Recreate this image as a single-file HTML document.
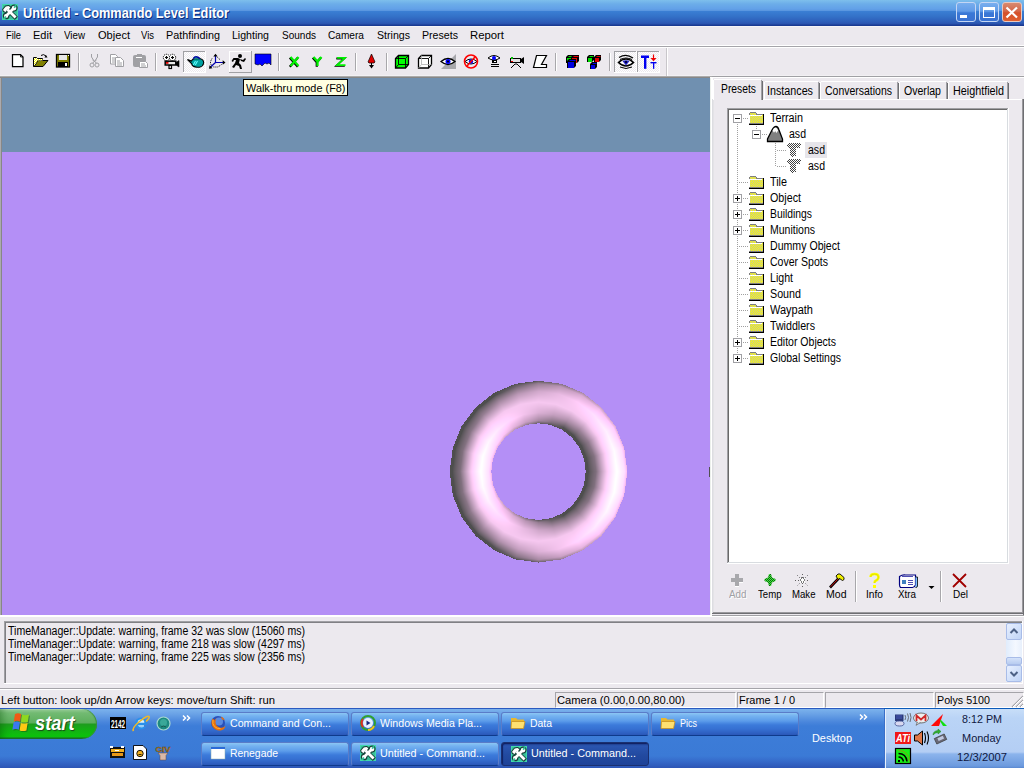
<!DOCTYPE html>
<html><head><meta charset="utf-8"><style>
html,body{margin:0;padding:0;width:1024px;height:768px;overflow:hidden;background:#ECE9EE;position:relative;font-family:'Liberation Sans', sans-serif}
</style></head><body>
<div style="position:absolute;left:0px;top:0px;width:1024px;height:26px;background:linear-gradient(to bottom,#7EBFEC 0px,#6CADE9 4px,#62A0E8 9px,#5A97E0 10.5px,#3A7ED3 11.5px,#3473C9 16px,#2D5DB8 22px,#2A52AD 24px,#1A3A92 25px,#1A3A92 26px)"></div>
<svg style="position:absolute;left:2px;top:4px" width="16" height="16" viewBox="0 0 16 16"><rect width="16" height="16" fill="#40D8AC"/><rect x="1" y="1" width="14" height="14" fill="#38BE98"/>
<g stroke="#174238" stroke-width="1.3" fill="#174238" stroke-linejoin="round"><path d="M0.8 5.4 L3.6 2.2 L6.6 1.6 L8.8 3.2 L7.6 5.2 L5.2 6.4 L4 8.4 L1.4 7.4 Z"/><circle cx="12.1" cy="4.1" r="2.9"/><circle cx="4.1" cy="12" r="2.7"/></g>
<g stroke="#174238" stroke-width="4.4" stroke-linecap="square" fill="none"><path d="M6.5 6.5 L12.8 12.8"/><path d="M4.5 11.5 L11.5 4.5"/></g>
<g stroke="#fff" stroke-width="2.8" stroke-linecap="square" fill="none"><path d="M6.5 6.5 L12.6 12.6"/><path d="M4.6 11.4 L11.4 4.6"/></g>
<g fill="#fff"><path d="M1.2 5.4 L3.8 2.6 L6.5 2.1 L8.3 3.3 L7.2 4.9 L4.9 6.1 L3.8 7.9 L1.7 7.1 Z"/><circle cx="12.1" cy="4.1" r="2.3"/><circle cx="4.1" cy="12" r="2.1"/></g>
<g fill="#38BE98"><rect x="12.2" y="1" width="1.8" height="3" transform="rotate(45 13.1 2.5)"/><rect x="2.1" y="12.2" width="1.8" height="3" transform="rotate(45 3 13.7)"/></g></svg>
<div style="position:absolute;left:956px;top:2px;width:20px;height:20px;box-sizing:border-box;border:1px solid #C4D6F4;border-radius:3px;background:linear-gradient(to bottom,#78AEEE 0%,#629CE8 45%,#3A78D6 55%,#3A72D2 100%)"></div>
<div style="position:absolute;left:979px;top:2px;width:20px;height:20px;box-sizing:border-box;border:1px solid #C4D6F4;border-radius:3px;background:linear-gradient(to bottom,#78AEEE 0%,#629CE8 45%,#3A78D6 55%,#3A72D2 100%)"></div>
<div style="position:absolute;left:1002px;top:2px;width:20px;height:20px;box-sizing:border-box;border:1px solid #E8C8C0;border-radius:3px;background:linear-gradient(to bottom,#D88A70 0%,#D5684A 45%,#D5502A 55%,#E06030 100%)"></div>
<div style="position:absolute;left:960px;top:15px;width:7px;height:3px;background:#fff"></div>
<div style="position:absolute;left:983px;top:7px;width:12px;height:11px;box-sizing:border-box;border:1px solid #fff;border-top-width:3px"></div>
<svg style="position:absolute;left:1005px;top:6px" width="14" height="13"><path d="M1.5 1.5 L12 11.5 M12 1.5 L1.5 11.5" stroke="#fff" stroke-width="2.2"/></svg>
<div style="position:absolute;left:0px;top:26px;width:1024px;height:1px;background:#F6F4F6"></div>
<div style="position:absolute;left:0px;top:45px;width:1024px;height:1px;background:#FFFFFF"></div>
<div style="position:absolute;left:0px;top:46px;width:1024px;height:1px;background:#A5A4A9"></div>
<div style="position:absolute;left:0px;top:47px;width:1024px;height:1px;background:#FFFFFF"></div>
<div style="position:absolute;left:0px;top:75px;width:1024px;height:1px;background:#F2F0F3"></div>
<div style="position:absolute;left:0px;top:76px;width:712px;height:1px;background:#ABABAB"></div>
<div style="position:absolute;left:0px;top:77px;width:710px;height:1px;background:#878787"></div>
<div style="position:absolute;left:712px;top:76px;width:312px;height:1px;background:#A0A0A4"></div>
<div style="position:absolute;left:712px;top:77px;width:312px;height:1px;background:#FFFFFF"></div>
<div style="position:absolute;left:666px;top:48px;width:1px;height:28px;background:#C8C6CA"></div>
<div style="position:absolute;left:667px;top:48px;width:1px;height:28px;background:#FFFFFF"></div>
<div style="position:absolute;left:0px;top:78px;width:1px;height:538px;background:#ABAAAE"></div>
<div style="position:absolute;left:1px;top:78px;width:1px;height:537px;background:#878787"></div>
<div style="position:absolute;left:2px;top:78px;width:708px;height:74px;background:#7090B0"></div>
<div style="position:absolute;left:2px;top:152px;width:708px;height:463px;background:#B48FF6"></div>
<div style="position:absolute;left:710px;top:77px;width:2px;height:540px;background:#FFFFFF"></div>
<div style="position:absolute;left:710px;top:78px;width:1px;height:537px;background:#ECF0EC"></div>
<div style="position:absolute;left:0px;top:615px;width:712px;height:2px;background:#FFFFFF"></div>
<div style="position:absolute;left:712px;top:78px;width:1px;height:536px;background:#E0DFE3"></div>
<div style="position:absolute;left:712px;top:613px;width:311px;height:1px;background:#8A8A8E"></div>
<div style="position:absolute;left:712px;top:615px;width:312px;height:1px;background:#A0A0A4"></div>
<div style="position:absolute;left:712px;top:616px;width:312px;height:1px;background:#FFFFFF"></div>
<div style="position:absolute;left:4px;top:621px;width:1019px;height:1px;background:#A0A0A4"></div>
<div style="position:absolute;left:4px;top:621px;width:1px;height:62px;background:#A0A0A4"></div>
<div style="position:absolute;left:5px;top:622px;width:1017px;height:1px;background:#808084"></div>
<div style="position:absolute;left:5px;top:622px;width:1px;height:61px;background:#808084"></div>
<div style="position:absolute;left:4px;top:683px;width:1019px;height:1px;background:#FFFFFF"></div>
<div style="position:absolute;left:1022px;top:621px;width:1px;height:63px;background:#FFFFFF"></div>
<div style="position:absolute;left:0px;top:688px;width:1024px;height:1px;background:#A5A4A9"></div>
<div style="position:absolute;left:0px;top:689px;width:1024px;height:1px;background:#FFFFFF"></div>
<div style="position:absolute;left:0px;top:708px;width:1024px;height:60px;background:linear-gradient(to bottom,#2A5AC0 0px,#2A5AC0 1px,#7BB2EC 1px,#6AA2E6 6px,#4A86DC 14px,#3D7DD8 18px,#3B7AD6 48px,#3568C8 54px,#2D55B5 60px)"></div>
<div style="position:absolute;left:712px;top:99px;width:312px;height:1px;background:#FFFFFF"></div>
<div style="position:absolute;left:712px;top:78px;width:1px;height:536px;background:#FFFFFF"></div>
<div style="position:absolute;left:713px;top:99px;width:1px;height:515px;background:#E4E3E7"></div>
<div style="position:absolute;left:712px;top:99px;width:1px;height:515px;background:#DDDDE1"></div>
<div style="position:absolute;left:1022px;top:99px;width:1px;height:515px;background:#9A999D"></div>
<div style="position:absolute;left:1023px;top:99px;width:1px;height:516px;background:#6E6E72"></div>
<div style="position:absolute;left:713px;top:612px;width:310px;height:1px;background:#9A999D"></div>
<div style="position:absolute;left:712px;top:613px;width:312px;height:1px;background:#6E6E72"></div>
<div style="position:absolute;left:764px;top:81px;width:56px;height:18px;background:#ECE9EE"></div>
<div style="position:absolute;left:765px;top:81px;width:53px;height:1px;background:#FFFFFF"></div>
<div style="position:absolute;left:764px;top:82px;width:1px;height:17px;background:#FFFFFF"></div>
<div style="position:absolute;left:818px;top:82px;width:1px;height:17px;background:#A0A0A4"></div>
<div style="position:absolute;left:819px;top:83px;width:1px;height:16px;background:#6E6E72"></div>
<div style="position:absolute;left:820px;top:81px;width:79px;height:18px;background:#ECE9EE"></div>
<div style="position:absolute;left:821px;top:81px;width:76px;height:1px;background:#FFFFFF"></div>
<div style="position:absolute;left:820px;top:82px;width:1px;height:17px;background:#FFFFFF"></div>
<div style="position:absolute;left:897px;top:82px;width:1px;height:17px;background:#A0A0A4"></div>
<div style="position:absolute;left:898px;top:83px;width:1px;height:16px;background:#6E6E72"></div>
<div style="position:absolute;left:899px;top:81px;width:49px;height:18px;background:#ECE9EE"></div>
<div style="position:absolute;left:900px;top:81px;width:46px;height:1px;background:#FFFFFF"></div>
<div style="position:absolute;left:899px;top:82px;width:1px;height:17px;background:#FFFFFF"></div>
<div style="position:absolute;left:946px;top:82px;width:1px;height:17px;background:#A0A0A4"></div>
<div style="position:absolute;left:947px;top:83px;width:1px;height:16px;background:#6E6E72"></div>
<div style="position:absolute;left:948px;top:81px;width:61px;height:18px;background:#ECE9EE"></div>
<div style="position:absolute;left:949px;top:81px;width:58px;height:1px;background:#FFFFFF"></div>
<div style="position:absolute;left:948px;top:82px;width:1px;height:17px;background:#FFFFFF"></div>
<div style="position:absolute;left:1007px;top:82px;width:1px;height:17px;background:#A0A0A4"></div>
<div style="position:absolute;left:1008px;top:83px;width:1px;height:16px;background:#6E6E72"></div>
<div style="position:absolute;left:713px;top:79px;width:50px;height:21px;background:#ECE9EE"></div>
<div style="position:absolute;left:714px;top:79px;width:47px;height:1px;background:#FFFFFF"></div>
<div style="position:absolute;left:713px;top:80px;width:1px;height:20px;background:#FFFFFF"></div>
<div style="position:absolute;left:761px;top:80px;width:1px;height:20px;background:#A0A0A4"></div>
<div style="position:absolute;left:762px;top:81px;width:1px;height:19px;background:#6E6E72"></div>
<div style="position:absolute;left:727px;top:108px;width:282px;height:456px;background:#FFFFFF"></div>
<div style="position:absolute;left:727px;top:108px;width:281px;height:1px;background:#A0A0A4"></div>
<div style="position:absolute;left:727px;top:108px;width:1px;height:455px;background:#A0A0A4"></div>
<div style="position:absolute;left:728px;top:109px;width:279px;height:1px;background:#696969"></div>
<div style="position:absolute;left:728px;top:109px;width:1px;height:453px;background:#696969"></div>
<div style="position:absolute;left:1007px;top:109px;width:1px;height:454px;background:#D8DCE0"></div>
<div style="position:absolute;left:728px;top:562px;width:280px;height:1px;background:#D8DCE0"></div>
<div style="position:absolute;left:1008px;top:108px;width:1px;height:456px;background:#FFFFFF"></div>
<div style="position:absolute;left:727px;top:563px;width:282px;height:1px;background:#FFFFFF"></div>
<div style="position:absolute;left:805px;top:142px;width:22px;height:16px;background:#E6E5EA"></div>
<svg style="position:absolute;left:0;top:0" width="1024" height="768" shape-rendering="crispEdges"><defs><pattern id="dith" width="2" height="2" patternUnits="userSpaceOnUse"><rect width="2" height="2" fill="#FFFF00"/><rect width="1" height="1" fill="#C0C0A0"/><rect x="1" y="1" width="1" height="1" fill="#C0C0A0"/></pattern><pattern id="chk" width="2" height="2" patternUnits="userSpaceOnUse"><rect width="2" height="2" fill="#fff"/><rect width="1" height="1" fill="#000"/><rect x="1" y="1" width="1" height="1" fill="#000"/></pattern></defs><rect x="737" y="124" width="1" height="1" fill="#A0A0A0"/><rect x="737" y="126" width="1" height="1" fill="#A0A0A0"/><rect x="737" y="128" width="1" height="1" fill="#A0A0A0"/><rect x="737" y="130" width="1" height="1" fill="#A0A0A0"/><rect x="737" y="132" width="1" height="1" fill="#A0A0A0"/><rect x="737" y="134" width="1" height="1" fill="#A0A0A0"/><rect x="737" y="136" width="1" height="1" fill="#A0A0A0"/><rect x="737" y="138" width="1" height="1" fill="#A0A0A0"/><rect x="737" y="140" width="1" height="1" fill="#A0A0A0"/><rect x="737" y="142" width="1" height="1" fill="#A0A0A0"/><rect x="737" y="144" width="1" height="1" fill="#A0A0A0"/><rect x="737" y="146" width="1" height="1" fill="#A0A0A0"/><rect x="737" y="148" width="1" height="1" fill="#A0A0A0"/><rect x="737" y="150" width="1" height="1" fill="#A0A0A0"/><rect x="737" y="152" width="1" height="1" fill="#A0A0A0"/><rect x="737" y="154" width="1" height="1" fill="#A0A0A0"/><rect x="737" y="156" width="1" height="1" fill="#A0A0A0"/><rect x="737" y="158" width="1" height="1" fill="#A0A0A0"/><rect x="737" y="160" width="1" height="1" fill="#A0A0A0"/><rect x="737" y="162" width="1" height="1" fill="#A0A0A0"/><rect x="737" y="164" width="1" height="1" fill="#A0A0A0"/><rect x="737" y="166" width="1" height="1" fill="#A0A0A0"/><rect x="737" y="168" width="1" height="1" fill="#A0A0A0"/><rect x="737" y="170" width="1" height="1" fill="#A0A0A0"/><rect x="737" y="172" width="1" height="1" fill="#A0A0A0"/><rect x="737" y="174" width="1" height="1" fill="#A0A0A0"/><rect x="737" y="176" width="1" height="1" fill="#A0A0A0"/><rect x="737" y="178" width="1" height="1" fill="#A0A0A0"/><rect x="737" y="180" width="1" height="1" fill="#A0A0A0"/><rect x="737" y="182" width="1" height="1" fill="#A0A0A0"/><rect x="737" y="184" width="1" height="1" fill="#A0A0A0"/><rect x="737" y="186" width="1" height="1" fill="#A0A0A0"/><rect x="737" y="188" width="1" height="1" fill="#A0A0A0"/><rect x="737" y="190" width="1" height="1" fill="#A0A0A0"/><rect x="737" y="192" width="1" height="1" fill="#A0A0A0"/><rect x="737" y="194" width="1" height="1" fill="#A0A0A0"/><rect x="737" y="196" width="1" height="1" fill="#A0A0A0"/><rect x="737" y="198" width="1" height="1" fill="#A0A0A0"/><rect x="737" y="200" width="1" height="1" fill="#A0A0A0"/><rect x="737" y="202" width="1" height="1" fill="#A0A0A0"/><rect x="737" y="204" width="1" height="1" fill="#A0A0A0"/><rect x="737" y="206" width="1" height="1" fill="#A0A0A0"/><rect x="737" y="208" width="1" height="1" fill="#A0A0A0"/><rect x="737" y="210" width="1" height="1" fill="#A0A0A0"/><rect x="737" y="212" width="1" height="1" fill="#A0A0A0"/><rect x="737" y="214" width="1" height="1" fill="#A0A0A0"/><rect x="737" y="216" width="1" height="1" fill="#A0A0A0"/><rect x="737" y="218" width="1" height="1" fill="#A0A0A0"/><rect x="737" y="220" width="1" height="1" fill="#A0A0A0"/><rect x="737" y="222" width="1" height="1" fill="#A0A0A0"/><rect x="737" y="224" width="1" height="1" fill="#A0A0A0"/><rect x="737" y="226" width="1" height="1" fill="#A0A0A0"/><rect x="737" y="228" width="1" height="1" fill="#A0A0A0"/><rect x="737" y="230" width="1" height="1" fill="#A0A0A0"/><rect x="737" y="232" width="1" height="1" fill="#A0A0A0"/><rect x="737" y="234" width="1" height="1" fill="#A0A0A0"/><rect x="737" y="236" width="1" height="1" fill="#A0A0A0"/><rect x="737" y="238" width="1" height="1" fill="#A0A0A0"/><rect x="737" y="240" width="1" height="1" fill="#A0A0A0"/><rect x="737" y="242" width="1" height="1" fill="#A0A0A0"/><rect x="737" y="244" width="1" height="1" fill="#A0A0A0"/><rect x="737" y="246" width="1" height="1" fill="#A0A0A0"/><rect x="737" y="248" width="1" height="1" fill="#A0A0A0"/><rect x="737" y="250" width="1" height="1" fill="#A0A0A0"/><rect x="737" y="252" width="1" height="1" fill="#A0A0A0"/><rect x="737" y="254" width="1" height="1" fill="#A0A0A0"/><rect x="737" y="256" width="1" height="1" fill="#A0A0A0"/><rect x="737" y="258" width="1" height="1" fill="#A0A0A0"/><rect x="737" y="260" width="1" height="1" fill="#A0A0A0"/><rect x="737" y="262" width="1" height="1" fill="#A0A0A0"/><rect x="737" y="264" width="1" height="1" fill="#A0A0A0"/><rect x="737" y="266" width="1" height="1" fill="#A0A0A0"/><rect x="737" y="268" width="1" height="1" fill="#A0A0A0"/><rect x="737" y="270" width="1" height="1" fill="#A0A0A0"/><rect x="737" y="272" width="1" height="1" fill="#A0A0A0"/><rect x="737" y="274" width="1" height="1" fill="#A0A0A0"/><rect x="737" y="276" width="1" height="1" fill="#A0A0A0"/><rect x="737" y="278" width="1" height="1" fill="#A0A0A0"/><rect x="737" y="280" width="1" height="1" fill="#A0A0A0"/><rect x="737" y="282" width="1" height="1" fill="#A0A0A0"/><rect x="737" y="284" width="1" height="1" fill="#A0A0A0"/><rect x="737" y="286" width="1" height="1" fill="#A0A0A0"/><rect x="737" y="288" width="1" height="1" fill="#A0A0A0"/><rect x="737" y="290" width="1" height="1" fill="#A0A0A0"/><rect x="737" y="292" width="1" height="1" fill="#A0A0A0"/><rect x="737" y="294" width="1" height="1" fill="#A0A0A0"/><rect x="737" y="296" width="1" height="1" fill="#A0A0A0"/><rect x="737" y="298" width="1" height="1" fill="#A0A0A0"/><rect x="737" y="300" width="1" height="1" fill="#A0A0A0"/><rect x="737" y="302" width="1" height="1" fill="#A0A0A0"/><rect x="737" y="304" width="1" height="1" fill="#A0A0A0"/><rect x="737" y="306" width="1" height="1" fill="#A0A0A0"/><rect x="737" y="308" width="1" height="1" fill="#A0A0A0"/><rect x="737" y="310" width="1" height="1" fill="#A0A0A0"/><rect x="737" y="312" width="1" height="1" fill="#A0A0A0"/><rect x="737" y="314" width="1" height="1" fill="#A0A0A0"/><rect x="737" y="316" width="1" height="1" fill="#A0A0A0"/><rect x="737" y="318" width="1" height="1" fill="#A0A0A0"/><rect x="737" y="320" width="1" height="1" fill="#A0A0A0"/><rect x="737" y="322" width="1" height="1" fill="#A0A0A0"/><rect x="737" y="324" width="1" height="1" fill="#A0A0A0"/><rect x="737" y="326" width="1" height="1" fill="#A0A0A0"/><rect x="737" y="328" width="1" height="1" fill="#A0A0A0"/><rect x="737" y="330" width="1" height="1" fill="#A0A0A0"/><rect x="737" y="332" width="1" height="1" fill="#A0A0A0"/><rect x="737" y="334" width="1" height="1" fill="#A0A0A0"/><rect x="737" y="336" width="1" height="1" fill="#A0A0A0"/><rect x="737" y="338" width="1" height="1" fill="#A0A0A0"/><rect x="737" y="340" width="1" height="1" fill="#A0A0A0"/><rect x="737" y="342" width="1" height="1" fill="#A0A0A0"/><rect x="737" y="344" width="1" height="1" fill="#A0A0A0"/><rect x="737" y="346" width="1" height="1" fill="#A0A0A0"/><rect x="737" y="348" width="1" height="1" fill="#A0A0A0"/><rect x="737" y="350" width="1" height="1" fill="#A0A0A0"/><rect x="737" y="352" width="1" height="1" fill="#A0A0A0"/><rect x="737" y="354" width="1" height="1" fill="#A0A0A0"/><rect x="737" y="356" width="1" height="1" fill="#A0A0A0"/><rect x="737" y="358" width="1" height="1" fill="#A0A0A0"/><rect x="733.5" y="114.5" width="8" height="8" fill="#fff" stroke="#A0A0A4" stroke-width="1"/><rect x="735" y="118" width="5" height="1" fill="#000"/><rect x="743" y="118" width="1" height="1" fill="#A0A0A0"/><rect x="745" y="118" width="1" height="1" fill="#A0A0A0"/><rect x="747" y="118" width="1" height="1" fill="#A0A0A0"/><path d="M750.5 112.5 h5 l1 1.5 h6.5 v9.5 h-13.5 v-10 z" fill="url(#dith)" stroke="#808080" stroke-width="1"/><rect x="749" y="115" width="1" height="8" fill="#fff"/><rect x="749" y="115" width="13" height="1" fill="#fff"/><rect x="763" y="114" width="1" height="10" fill="#000"/><rect x="749" y="124" width="15" height="1" fill="#000"/><rect x="739" y="182" width="1" height="1" fill="#A0A0A0"/><rect x="741" y="182" width="1" height="1" fill="#A0A0A0"/><rect x="743" y="182" width="1" height="1" fill="#A0A0A0"/><rect x="745" y="182" width="1" height="1" fill="#A0A0A0"/><rect x="747" y="182" width="1" height="1" fill="#A0A0A0"/><path d="M750.5 176.5 h5 l1 1.5 h6.5 v9.5 h-13.5 v-10 z" fill="url(#dith)" stroke="#808080" stroke-width="1"/><rect x="749" y="179" width="1" height="8" fill="#fff"/><rect x="749" y="179" width="13" height="1" fill="#fff"/><rect x="763" y="178" width="1" height="10" fill="#000"/><rect x="749" y="188" width="15" height="1" fill="#000"/><rect x="733.5" y="194.5" width="8" height="8" fill="#fff" stroke="#A0A0A4" stroke-width="1"/><rect x="735" y="198" width="5" height="1" fill="#000"/><rect x="737" y="196" width="1" height="5" fill="#000"/><rect x="743" y="198" width="1" height="1" fill="#A0A0A0"/><rect x="745" y="198" width="1" height="1" fill="#A0A0A0"/><rect x="747" y="198" width="1" height="1" fill="#A0A0A0"/><path d="M750.5 192.5 h5 l1 1.5 h6.5 v9.5 h-13.5 v-10 z" fill="url(#dith)" stroke="#808080" stroke-width="1"/><rect x="749" y="195" width="1" height="8" fill="#fff"/><rect x="749" y="195" width="13" height="1" fill="#fff"/><rect x="763" y="194" width="1" height="10" fill="#000"/><rect x="749" y="204" width="15" height="1" fill="#000"/><rect x="733.5" y="210.5" width="8" height="8" fill="#fff" stroke="#A0A0A4" stroke-width="1"/><rect x="735" y="214" width="5" height="1" fill="#000"/><rect x="737" y="212" width="1" height="5" fill="#000"/><rect x="743" y="214" width="1" height="1" fill="#A0A0A0"/><rect x="745" y="214" width="1" height="1" fill="#A0A0A0"/><rect x="747" y="214" width="1" height="1" fill="#A0A0A0"/><path d="M750.5 208.5 h5 l1 1.5 h6.5 v9.5 h-13.5 v-10 z" fill="url(#dith)" stroke="#808080" stroke-width="1"/><rect x="749" y="211" width="1" height="8" fill="#fff"/><rect x="749" y="211" width="13" height="1" fill="#fff"/><rect x="763" y="210" width="1" height="10" fill="#000"/><rect x="749" y="220" width="15" height="1" fill="#000"/><rect x="733.5" y="226.5" width="8" height="8" fill="#fff" stroke="#A0A0A4" stroke-width="1"/><rect x="735" y="230" width="5" height="1" fill="#000"/><rect x="737" y="228" width="1" height="5" fill="#000"/><rect x="743" y="230" width="1" height="1" fill="#A0A0A0"/><rect x="745" y="230" width="1" height="1" fill="#A0A0A0"/><rect x="747" y="230" width="1" height="1" fill="#A0A0A0"/><path d="M750.5 224.5 h5 l1 1.5 h6.5 v9.5 h-13.5 v-10 z" fill="url(#dith)" stroke="#808080" stroke-width="1"/><rect x="749" y="227" width="1" height="8" fill="#fff"/><rect x="749" y="227" width="13" height="1" fill="#fff"/><rect x="763" y="226" width="1" height="10" fill="#000"/><rect x="749" y="236" width="15" height="1" fill="#000"/><rect x="739" y="246" width="1" height="1" fill="#A0A0A0"/><rect x="741" y="246" width="1" height="1" fill="#A0A0A0"/><rect x="743" y="246" width="1" height="1" fill="#A0A0A0"/><rect x="745" y="246" width="1" height="1" fill="#A0A0A0"/><rect x="747" y="246" width="1" height="1" fill="#A0A0A0"/><path d="M750.5 240.5 h5 l1 1.5 h6.5 v9.5 h-13.5 v-10 z" fill="url(#dith)" stroke="#808080" stroke-width="1"/><rect x="749" y="243" width="1" height="8" fill="#fff"/><rect x="749" y="243" width="13" height="1" fill="#fff"/><rect x="763" y="242" width="1" height="10" fill="#000"/><rect x="749" y="252" width="15" height="1" fill="#000"/><rect x="739" y="262" width="1" height="1" fill="#A0A0A0"/><rect x="741" y="262" width="1" height="1" fill="#A0A0A0"/><rect x="743" y="262" width="1" height="1" fill="#A0A0A0"/><rect x="745" y="262" width="1" height="1" fill="#A0A0A0"/><rect x="747" y="262" width="1" height="1" fill="#A0A0A0"/><path d="M750.5 256.5 h5 l1 1.5 h6.5 v9.5 h-13.5 v-10 z" fill="url(#dith)" stroke="#808080" stroke-width="1"/><rect x="749" y="259" width="1" height="8" fill="#fff"/><rect x="749" y="259" width="13" height="1" fill="#fff"/><rect x="763" y="258" width="1" height="10" fill="#000"/><rect x="749" y="268" width="15" height="1" fill="#000"/><rect x="739" y="278" width="1" height="1" fill="#A0A0A0"/><rect x="741" y="278" width="1" height="1" fill="#A0A0A0"/><rect x="743" y="278" width="1" height="1" fill="#A0A0A0"/><rect x="745" y="278" width="1" height="1" fill="#A0A0A0"/><rect x="747" y="278" width="1" height="1" fill="#A0A0A0"/><path d="M750.5 272.5 h5 l1 1.5 h6.5 v9.5 h-13.5 v-10 z" fill="url(#dith)" stroke="#808080" stroke-width="1"/><rect x="749" y="275" width="1" height="8" fill="#fff"/><rect x="749" y="275" width="13" height="1" fill="#fff"/><rect x="763" y="274" width="1" height="10" fill="#000"/><rect x="749" y="284" width="15" height="1" fill="#000"/><rect x="739" y="294" width="1" height="1" fill="#A0A0A0"/><rect x="741" y="294" width="1" height="1" fill="#A0A0A0"/><rect x="743" y="294" width="1" height="1" fill="#A0A0A0"/><rect x="745" y="294" width="1" height="1" fill="#A0A0A0"/><rect x="747" y="294" width="1" height="1" fill="#A0A0A0"/><path d="M750.5 288.5 h5 l1 1.5 h6.5 v9.5 h-13.5 v-10 z" fill="url(#dith)" stroke="#808080" stroke-width="1"/><rect x="749" y="291" width="1" height="8" fill="#fff"/><rect x="749" y="291" width="13" height="1" fill="#fff"/><rect x="763" y="290" width="1" height="10" fill="#000"/><rect x="749" y="300" width="15" height="1" fill="#000"/><rect x="739" y="310" width="1" height="1" fill="#A0A0A0"/><rect x="741" y="310" width="1" height="1" fill="#A0A0A0"/><rect x="743" y="310" width="1" height="1" fill="#A0A0A0"/><rect x="745" y="310" width="1" height="1" fill="#A0A0A0"/><rect x="747" y="310" width="1" height="1" fill="#A0A0A0"/><path d="M750.5 304.5 h5 l1 1.5 h6.5 v9.5 h-13.5 v-10 z" fill="url(#dith)" stroke="#808080" stroke-width="1"/><rect x="749" y="307" width="1" height="8" fill="#fff"/><rect x="749" y="307" width="13" height="1" fill="#fff"/><rect x="763" y="306" width="1" height="10" fill="#000"/><rect x="749" y="316" width="15" height="1" fill="#000"/><rect x="739" y="326" width="1" height="1" fill="#A0A0A0"/><rect x="741" y="326" width="1" height="1" fill="#A0A0A0"/><rect x="743" y="326" width="1" height="1" fill="#A0A0A0"/><rect x="745" y="326" width="1" height="1" fill="#A0A0A0"/><rect x="747" y="326" width="1" height="1" fill="#A0A0A0"/><path d="M750.5 320.5 h5 l1 1.5 h6.5 v9.5 h-13.5 v-10 z" fill="url(#dith)" stroke="#808080" stroke-width="1"/><rect x="749" y="323" width="1" height="8" fill="#fff"/><rect x="749" y="323" width="13" height="1" fill="#fff"/><rect x="763" y="322" width="1" height="10" fill="#000"/><rect x="749" y="332" width="15" height="1" fill="#000"/><rect x="733.5" y="338.5" width="8" height="8" fill="#fff" stroke="#A0A0A4" stroke-width="1"/><rect x="735" y="342" width="5" height="1" fill="#000"/><rect x="737" y="340" width="1" height="5" fill="#000"/><rect x="743" y="342" width="1" height="1" fill="#A0A0A0"/><rect x="745" y="342" width="1" height="1" fill="#A0A0A0"/><rect x="747" y="342" width="1" height="1" fill="#A0A0A0"/><path d="M750.5 336.5 h5 l1 1.5 h6.5 v9.5 h-13.5 v-10 z" fill="url(#dith)" stroke="#808080" stroke-width="1"/><rect x="749" y="339" width="1" height="8" fill="#fff"/><rect x="749" y="339" width="13" height="1" fill="#fff"/><rect x="763" y="338" width="1" height="10" fill="#000"/><rect x="749" y="348" width="15" height="1" fill="#000"/><rect x="733.5" y="354.5" width="8" height="8" fill="#fff" stroke="#A0A0A4" stroke-width="1"/><rect x="735" y="358" width="5" height="1" fill="#000"/><rect x="737" y="356" width="1" height="5" fill="#000"/><rect x="743" y="358" width="1" height="1" fill="#A0A0A0"/><rect x="745" y="358" width="1" height="1" fill="#A0A0A0"/><rect x="747" y="358" width="1" height="1" fill="#A0A0A0"/><path d="M750.5 352.5 h5 l1 1.5 h6.5 v9.5 h-13.5 v-10 z" fill="url(#dith)" stroke="#808080" stroke-width="1"/><rect x="749" y="355" width="1" height="8" fill="#fff"/><rect x="749" y="355" width="13" height="1" fill="#fff"/><rect x="763" y="354" width="1" height="10" fill="#000"/><rect x="749" y="364" width="15" height="1" fill="#000"/><rect x="756" y="126" width="1" height="1" fill="#A0A0A0"/><rect x="756" y="128" width="1" height="1" fill="#A0A0A0"/><rect x="752.5" y="130.5" width="8" height="8" fill="#fff" stroke="#A0A0A4" stroke-width="1"/><rect x="754" y="134" width="5" height="1" fill="#000"/><rect x="762" y="134" width="1" height="1" fill="#A0A0A0"/><rect x="764" y="134" width="1" height="1" fill="#A0A0A0"/><rect x="766" y="134" width="1" height="1" fill="#A0A0A0"/><path d="M767.5 141.5 L767.5 139 L772 130 Q774 126.5 776 126.5 Q778 126.5 779 130 L782.5 139 L782.5 141.5 Z" fill="#808080" stroke="#000" stroke-width="1.3" shape-rendering="auto"/><path d="M772.6 130.5 L774 132.8 L775.2 131 L776.3 133 L778.2 130.5 Q777 127.6 775.3 127.6 Q773.8 127.6 772.6 130.5 Z" fill="#fff" shape-rendering="auto"/><rect x="775" y="143" width="1" height="1" fill="#A0A0A0"/><rect x="775" y="145" width="1" height="1" fill="#A0A0A0"/><rect x="775" y="147" width="1" height="1" fill="#A0A0A0"/><rect x="775" y="149" width="1" height="1" fill="#A0A0A0"/><rect x="775" y="151" width="1" height="1" fill="#A0A0A0"/><rect x="775" y="153" width="1" height="1" fill="#A0A0A0"/><rect x="775" y="155" width="1" height="1" fill="#A0A0A0"/><rect x="775" y="157" width="1" height="1" fill="#A0A0A0"/><rect x="775" y="159" width="1" height="1" fill="#A0A0A0"/><rect x="775" y="161" width="1" height="1" fill="#A0A0A0"/><rect x="775" y="163" width="1" height="1" fill="#A0A0A0"/><rect x="775" y="165" width="1" height="1" fill="#A0A0A0"/><rect x="777" y="150" width="1" height="1" fill="#A0A0A0"/><rect x="779" y="150" width="1" height="1" fill="#A0A0A0"/><rect x="781" y="150" width="1" height="1" fill="#A0A0A0"/><rect x="783" y="150" width="1" height="1" fill="#A0A0A0"/><rect x="785" y="150" width="1" height="1" fill="#A0A0A0"/><rect x="777" y="166" width="1" height="1" fill="#A0A0A0"/><rect x="779" y="166" width="1" height="1" fill="#A0A0A0"/><rect x="781" y="166" width="1" height="1" fill="#A0A0A0"/><rect x="783" y="166" width="1" height="1" fill="#A0A0A0"/><rect x="785" y="166" width="1" height="1" fill="#A0A0A0"/><path d="M788 143 h13 v2 l-1 1 v1 l-1 1 h-3 v7 l-1 1 h-1 v1 h-2 v-1 h-1 l-1 -1 v-7 h-2 l-1 -1 v-1 l-1 -1 z" fill="url(#chk)" opacity="0.75"/><path d="M788 159 h13 v2 l-1 1 v1 l-1 1 h-3 v7 l-1 1 h-1 v1 h-2 v-1 h-1 l-1 -1 v-7 h-2 l-1 -1 v-1 l-1 -1 z" fill="url(#chk)" opacity="0.75"/></svg>
<svg style="position:absolute;left:0;top:0" width="1024" height="80"><defs><pattern id="pdith" width="2" height="2" patternUnits="userSpaceOnUse"><rect width="2" height="2" fill="#FFFFFF"/><rect width="1" height="1" fill="#ECE9EE"/><rect x="1" y="1" width="1" height="1" fill="#ECE9EE"/></pattern><pattern id="ydith" width="2" height="2" patternUnits="userSpaceOnUse"><rect width="2" height="2" fill="#FFFF00"/><rect width="1" height="1" fill="#FFFFFF"/><rect x="1" y="1" width="1" height="1" fill="#FFFFFF"/></pattern></defs><rect x="78" y="53" width="1" height="18" fill="#A8A7AB"/><rect x="79" y="53" width="1" height="18" fill="#FFFFFF"/><rect x="155" y="53" width="1" height="18" fill="#A8A7AB"/><rect x="156" y="53" width="1" height="18" fill="#FFFFFF"/><rect x="278" y="53" width="1" height="18" fill="#A8A7AB"/><rect x="279" y="53" width="1" height="18" fill="#FFFFFF"/><rect x="355" y="53" width="1" height="18" fill="#A8A7AB"/><rect x="356" y="53" width="1" height="18" fill="#FFFFFF"/><rect x="386" y="53" width="1" height="18" fill="#A8A7AB"/><rect x="387" y="53" width="1" height="18" fill="#FFFFFF"/><rect x="555" y="53" width="1" height="18" fill="#A8A7AB"/><rect x="556" y="53" width="1" height="18" fill="#FFFFFF"/><rect x="609" y="53" width="1" height="18" fill="#A8A7AB"/><rect x="610" y="53" width="1" height="18" fill="#FFFFFF"/><rect x="183" y="51" width="22" height="21" fill="url(#pdith)"/><rect x="183" y="51" width="22" height="1" fill="#A0A0A4"/><rect x="183" y="51" width="1" height="21" fill="#A0A0A4"/><rect x="183" y="72" width="23" height="1" fill="#FFFFFF"/><rect x="205" y="51" width="1" height="22" fill="#FFFFFF"/><rect x="614" y="51" width="22" height="21" fill="url(#pdith)"/><rect x="614" y="51" width="22" height="1" fill="#A0A0A4"/><rect x="614" y="51" width="1" height="21" fill="#A0A0A4"/><rect x="614" y="72" width="23" height="1" fill="#FFFFFF"/><rect x="636" y="51" width="1" height="22" fill="#FFFFFF"/><rect x="637" y="51" width="22" height="21" fill="url(#pdith)"/><rect x="637" y="51" width="22" height="1" fill="#A0A0A4"/><rect x="637" y="51" width="1" height="21" fill="#A0A0A4"/><rect x="637" y="72" width="23" height="1" fill="#FFFFFF"/><rect x="659" y="51" width="1" height="22" fill="#FFFFFF"/><rect x="229" y="51" width="22" height="1" fill="#FFFFFF"/><rect x="229" y="51" width="1" height="21" fill="#FFFFFF"/><rect x="229" y="72" width="23" height="1" fill="#A0A0A4"/><rect x="251" y="51" width="1" height="22" fill="#A0A0A4"/><path d="M12.5 54.5 h8 l2.5 2.5 v9.5 h-10.5 z" fill="#fff" stroke="#000" stroke-width="1.25"/><path d="M20.5 54.5 v2.5 h2.5" fill="none" stroke="#000" stroke-width="0.8"/><path d="M33.5 57.5 h3 l1 1 h5 v2 h-9 z" fill="url(#ydith)" stroke="#000"/><path d="M33.5 58.5 v8 h9.5 l5 -6 h-10 l-4 6" fill="#808000" stroke="#000"/><path d="M34 60 v6 l3.5 -5.5 h5 v-1.5 z" fill="url(#ydith)"/><path d="M41 55.5 q2.5 -2 5 0.5" fill="none" stroke="#000"/><path d="M46 55 l1.5 2.5 l-3 0 z" fill="#000"/><rect x="56.5" y="54.5" width="13" height="12.5" fill="#808000" stroke="#000" stroke-width="1.3"/><rect x="59" y="55" width="8" height="5" fill="#E8E8E8"/><rect x="58" y="62" width="10" height="5" fill="#000"/><rect x="65" y="63" width="2" height="3" fill="#fff"/><rect x="68" y="55" width="1" height="1" fill="#fff"/><g fill="none" stroke="#A0A0A4" stroke-width="1"><path d="M91.5 54 v3 l3 4.5 l3 -4.5 v-3"/><circle cx="92" cy="65" r="2"/><circle cx="97" cy="65" r="2"/><path d="M92.5 63 l4 -3 M96.5 63 l-4 -3"/></g><g fill="#fff" stroke="#A0A0A4"><path d="M110.5 54.5 h5 l2 2 v7.5 h-7 z"/><path d="M115.5 57.5 h5 l3 3 v6 h-8 z"/></g><g stroke="#A0A0A4"><path d="M112 58h3M112 60h4M112 62h3M117 61h3M117 63h5M117 65h5"/></g><rect x="133" y="55" width="13" height="12" rx="2" fill="#A0A0A4"/><rect x="137" y="54" width="5" height="2" fill="#A0A0A4"/><rect x="136" y="57" width="6" height="1" fill="#fff"/><path d="M139.5 61.5 h6 l2 2 v4 h-8 z" fill="#fff" stroke="#A0A0A4"/><path d="M141 64h4M141 66h5" stroke="#A0A0A4"/><g><circle cx="166.5" cy="57.5" r="3.2" fill="#fff" stroke="#000" stroke-width="1" stroke-dasharray="1.2 0.8"/><circle cx="172.5" cy="57.5" r="3.2" fill="#fff" stroke="#000" stroke-width="1" stroke-dasharray="1.2 0.8"/><path d="M165 57.5h3M166.5 56v3M171 57.5h3M172.5 56v3" stroke="#000" stroke-width="1.2"/><rect x="165.2" y="61.2" width="10.6" height="3.8" fill="#E8E8E8" stroke="#000" stroke-width="1.5"/><rect x="166" y="62" width="2.5" height="1.8" fill="#E00000"/><path d="M176 62.5 l3 -2 v6.5 l-3 -2 z" fill="#000" stroke="#000" stroke-width="0.6"/><rect x="169" y="65.5" width="2.5" height="3" fill="#fff" stroke="#000" stroke-width="1.2"/></g><path d="M187.5 59.5 l4 4 q1 3.5 5.5 3.8 h2.5 q3.5 -0.8 4.2 -4.3 q0 -3.2 -3.2 -4.2 h-6.5 q-1.8 0.8 -2.5 2.2 z" fill="#00A0A0" stroke="#000" stroke-width="1.1"/><path d="M193.2 58.6 q2.5 -3.6 6.8 0" fill="#20C8C8" stroke="#0000A0" stroke-width="1.6"/><path d="M195.5 61 l-2.2 4 M197.5 61 l-2.2 4" stroke="#60FFFF" stroke-width="1.1"/><g fill="none"><path d="M212 58.5 l-1.5 3 v2.5 l3 3 h4.5 l3.5 -2.5 M217.5 57.5 l3 2.5" stroke="#000" stroke-width="1" stroke-dasharray="1 1"/><path d="M215.5 56 v6.5 h8 M215.5 62.5 l-5.5 5" stroke="#0000B0" stroke-width="1.2"/><path d="M215.5 53.8 l-2.2 2.7 h4.4 z M225.5 62.5 l-2.8 -2.2 v4.4 z M209 68.8 l0.6 -3.5 l2.9 2.9 z" fill="#000"/></g><g fill="#000"><circle cx="240" cy="56" r="2"/><path d="M238 58 l2 1 l-1 4 l2 2 l1 4 h-2 l-1 -3 l-3 -1 l-2 3 l-2 -1 l3 -4 l1 -3 l-2 0 l-1 2 l-1.5 -1 l2 -3 z"/><path d="M240 59 l3 1 l2 -2 l1 1 l-2 3 l-3 -1 z"/></g><path d="M255 54 h16 v11 l-2 -2 l-2 1 l-2 -1 l-3 3 l-2 -2 l-2 1 l-3 -1 z" fill="#0000FF" stroke="#000" stroke-width="0.6"/><g transform="translate(-0.7,0.7)" stroke="#000" stroke-width="2.3" fill="none" stroke-linecap="butt"><path d="M290.5 57 L298.5 66 M298.5 57 L290.5 66"/><path d="M313.5 57 L317.5 61.5 L321.5 57 M317.5 61.5 V66"/><path d="M337 57.8 H345 L337 65.2 H345.5" stroke-width="1.8"/></g><g transform="translate(0,0)" stroke="#00F000" stroke-width="2.3" fill="none" stroke-linecap="butt"><path d="M290.5 57 L298.5 66 M298.5 57 L290.5 66"/><path d="M313.5 57 L317.5 61.5 L321.5 57 M317.5 61.5 V66"/><path d="M337 57.8 H345 L337 65.2 H345.5" stroke-width="1.8"/></g><path d="M371.5 54 l-3.5 8 l1 1 h5 l1 -1 z" fill="#E00000" stroke="#000" stroke-width="0.7"/><path d="M369 65 h5 l-2.5 3.5 z" fill="#000"/><rect x="371" y="63" width="1" height="3" fill="#000"/><path d="M398.5 55.5 h10 v9 l-3 3.5 h-10 v-9.5 z" fill="#00FF00" stroke="#000" stroke-width="1.3"/><path d="M395.5 58.5 h10 v9.5 M405.5 58.5 l3 -3 M398.5 55.5 v9 h10 M398.5 64.5 l-3 3.5" fill="none" stroke="#000" stroke-width="0.9"/><path d="M421.5 55.5 h10 v9 l-3 3.5 h-10 v-9.5 z" fill="#fff" stroke="#000" stroke-width="1.3"/><path d="M418.5 58.5 h10 v9.5 M428.5 58.5 l3 -3" fill="none" stroke="#000" stroke-width="0.9"/><path d="M421.5 55.5 v9 h10 M421.5 64.5 l-3 3.5" fill="none" stroke="#B0B0B0" stroke-width="0.8"/><path d="M456 54 v15 h-15 z" fill="#A8A8AC"/><path d="M441 61.5 q7 -6 14 0 q-7 6 -14 0 z" fill="#fff" stroke="#000" stroke-width="1.3"/><circle cx="448" cy="61.5" r="2.5" fill="#0000FF"/><circle cx="448" cy="61.5" r="1" fill="#000"/><path d="M465 61.5 q6 -5 12 0 q-6 5 -12 0 z" fill="#fff" stroke="#000"/><circle cx="471" cy="61.5" r="2.2" fill="#0000FF"/><circle cx="471" cy="61.5" r="6.5" fill="none" stroke="#FF0000" stroke-width="1.6"/><path d="M467 66 l8 -9" stroke="#FF0000" stroke-width="1.6"/><path d="M488 58 q6 -5 12 0 q-6 4 -12 0 z" fill="#fff" stroke="#000"/><circle cx="494" cy="58" r="2" fill="#0000FF"/><rect x="492" y="60" width="5" height="3" fill="#000"/><rect x="494" y="61" width="2" height="1" fill="#fff"/><path d="M491 64.5h8M491 66.5h8" stroke="#000" stroke-width="1.2"/><rect x="510.5" y="58.5" width="10" height="4" fill="#E0E0E0" stroke="#000"/><rect x="511" y="57" width="2" height="2" fill="#00C000"/><rect x="511" y="61" width="2" height="1" fill="#E00000"/><path d="M521 59 l3 -2 v7 l-3 -2 z" fill="#000"/><path d="M511 68 l4 -4 h2 l4 4" fill="none" stroke="#000"/><path d="M536.5 55.5 h10 l-5 9 h5 v3 h-13 z" fill="#fff" stroke="#000" stroke-width="1.2"/><path d="M566 57 l2 -2 h6 v6 l-2 2 h-6 z" fill="#000"/><rect x="567" y="58" width="5" height="5" fill="#00E000"/><path d="M569 56 h5 l-1 1 h-5 z" fill="#00E000"/><path d="M571 57 l2 -2 h6 v6 l-2 2 h-6 z" fill="#000"/><rect x="572" y="58" width="5" height="5" fill="#E00000"/><path d="M574 56 h5 l-1 1 h-5 z" fill="#E00000"/><path d="M567 61 l2 -2 h7 v7 l-2 2 h-7 z" fill="#000"/><rect x="568" y="62" width="6" height="6" fill="#0000E0"/><path d="M570 60 h6 l-1 1 h-6 z" fill="#0000E0"/><path d="M587 57 l2 -2 h5 v5 l-2 2 h-5 z" fill="#000"/><rect x="588" y="58" width="4" height="4" fill="#00E000"/><path d="M590 56 h4 l-1 1 h-4 z" fill="#00E000"/><path d="M594 57 l2 -2 h5 v5 l-2 2 h-5 z" fill="#000"/><rect x="595" y="58" width="4" height="4" fill="#E00000"/><path d="M597 56 h4 l-1 1 h-4 z" fill="#E00000"/><path d="M590 64 l2 -2 h5 v5 l-2 2 h-5 z" fill="#000"/><rect x="591" y="65" width="4" height="4" fill="#0000E0"/><path d="M593 63 h4 l-1 1 h-4 z" fill="#0000E0"/><path d="M618.5 62.5 q7.5 -7 15 0 q-7.5 7 -15 0 z" fill="#fff" stroke="#000" stroke-width="1.6"/><path d="M619 57.5 q7 -4.5 14 0.5 M620 59.5 q6 -3 12 0" fill="none" stroke="#000" stroke-width="1.1"/><path d="M622.5 61 q3.5 -1.5 7 0 l-3.5 4.5 z" fill="#2020C0"/><rect x="625" y="61" width="2" height="2" fill="#000040"/><path d="M620 67 q6 3 12 0" fill="none" stroke="#000" stroke-width="1"/><rect x="641" y="55.5" width="8" height="2.5" fill="#0000F0"/><rect x="644" y="57" width="2.4" height="11.8" fill="#0000F0"/><path d="M653.5 54.5 v4" stroke="#F00000" stroke-width="1.2"/><path d="M650.5 58 h6 l-3 3.2 z" fill="#F00000"/><rect x="650.5" y="62" width="6" height="1.4" fill="#0000F0"/><rect x="653" y="62" width="1.3" height="6.8" fill="#0000F0"/></svg>
<div style="position:absolute;left:243px;top:79px;width:105px;height:17px;box-sizing:border-box;border:1px solid #000;background:#FFFFE1"></div>
<svg style="position:absolute;left:0;top:0" width="1024" height="768" style="pointer-events:none"><defs><pattern id="gchk" width="2" height="2" patternUnits="userSpaceOnUse"><rect width="2" height="2" fill="#40F040"/><rect width="1" height="1" fill="#106010"/><rect x="1" y="1" width="1" height="1" fill="#106010"/></pattern></defs><path d="M735 574 h4 v4 h4 v4 h-4 v4 h-4 v-4 h-4 v-4 h4 z" fill="#A8A8AC"/><path d="M739 586.5 h-4 M743 582.5 h-4" stroke="#fff" stroke-width="1"/><path d="M769 574 h2 l1 3.5 l3.5 1.5 v2 l-3.5 1.5 l-1 3.5 h-2 l-1 -3.5 l-3.5 -1.5 v-2 l3.5 -1.5 z" fill="url(#gchk)"/><g stroke="#404040" stroke-width="1" stroke-dasharray="1 2" opacity="0.8"><path d="M802.5 574 v14 M795 580.5 h15 M797 575 l11 11 M808 575 l-11 11"/></g><rect x="800" y="578" width="5" height="5" fill="#fff"/><path d="M801 578h1M803 578h1M800 580h1M804 580h1M801 582h1M803 582h1" stroke="#000"/><path d="M830 587.5 l9.5 -10" stroke="#000" stroke-width="2.6"/><path d="M830.6 586.8 l8.8 -9.3" stroke="#D01010" stroke-width="1"/><path d="M836 576 l2 -2 h2 l4 3.5 v2 l-1.5 1 l-3 -2 l-1.5 1 z" fill="#F0F000" stroke="#000" stroke-width="0.9"/><rect x="855" y="571" width="1" height="31" fill="#A8A7AB"/><rect x="856" y="571" width="1" height="31" fill="#fff"/><rect x="940" y="571" width="1" height="31" fill="#A8A7AB"/><rect x="941" y="571" width="1" height="31" fill="#fff"/><path d="M870.5 577 q0 -3 4 -3 q4 0 4 3 q0 2.5 -2.5 3.5 q-1.5 0.6 -1.5 2.5" fill="none" stroke="#FFFF00" stroke-width="2.5"/><path d="M870.5 577 q0 -3 4 -3 q4 0 4 3 q0 2.5 -2.5 3.5 q-1.5 0.6 -1.5 2.5" fill="none" stroke="#C0C000" stroke-width="0.5"/><rect x="873" y="585" width="3" height="3" fill="#FFFF00"/><path d="M899.5 576.5 q3 -2 6 -1.5 h10 v10 q-1 2.5 -3 2.5 h-12 q-1 -1 -1 -3 z" fill="#fff" stroke="#000080" stroke-width="1.2"/><rect x="902" y="580" width="4" height="4" fill="#4080C0"/><path d="M908 580.5h5M908 582.5h5M908 584.5h5M902 576.5h11" stroke="#2020A0" stroke-width="0.8"/><path d="M915.5 577 h2 v9 q0 1.5 -2 1.5" fill="#80C0FF" stroke="#000" stroke-width="0.8"/><path d="M928.5 586 h6 l-3 3 z" fill="#000"/><path d="M953 574 l13 13 M966 574 l-13 13" stroke="#A00000" stroke-width="1.8"/></svg>
<div style="position:absolute;left:1006px;top:623px;width:16px;height:59px;background:linear-gradient(to right,#E0ECFC,#F4F8FF 60%,#E8F0FC)"></div>
<div style="position:absolute;left:1006px;top:623px;width:16px;height:17px;box-sizing:border-box;border:1px solid #A8BCE8;border-radius:2px;background:linear-gradient(to bottom right,#E8F0FF,#C0D4F6)"></div>
<svg style="position:absolute;left:1006px;top:623px" width="16" height="17"><path d="M4.5 10 L8 6.5 L11.5 10" fill="none" stroke="#4D6185" stroke-width="2"/></svg>
<div style="position:absolute;left:1006px;top:665px;width:16px;height:17px;box-sizing:border-box;border:1px solid #A8BCE8;border-radius:2px;background:linear-gradient(to bottom right,#E8F0FF,#C0D4F6)"></div>
<svg style="position:absolute;left:1006px;top:665px" width="16" height="17"><path d="M4.5 7 L8 10.5 L11.5 7" fill="none" stroke="#4D6185" stroke-width="2"/></svg>
<div style="position:absolute;left:1006px;top:657px;width:16px;height:8px;box-sizing:border-box;border:1px solid #A8BCE8;border-radius:2px;background:linear-gradient(to bottom,#D4E2FA,#B8CCF0)"></div>
<div style="position:absolute;left:555px;top:692px;width:181px;height:16px;box-sizing:border-box;border-top:1px solid #A5A4A9;border-left:1px solid #A5A4A9;border-right:1px solid #FFFFFF;border-bottom:1px solid #FFFFFF"></div>
<div style="position:absolute;left:737px;top:692px;width:87px;height:16px;box-sizing:border-box;border-top:1px solid #A5A4A9;border-left:1px solid #A5A4A9;border-right:1px solid #FFFFFF;border-bottom:1px solid #FFFFFF"></div>
<div style="position:absolute;left:825px;top:692px;width:109px;height:16px;box-sizing:border-box;border-top:1px solid #A5A4A9;border-left:1px solid #A5A4A9;border-right:1px solid #FFFFFF;border-bottom:1px solid #FFFFFF"></div>
<div style="position:absolute;left:935px;top:692px;width:89px;height:16px;box-sizing:border-box;border-top:1px solid #A5A4A9;border-left:1px solid #A5A4A9;border-right:1px solid #FFFFFF;border-bottom:1px solid #FFFFFF"></div>
<svg style="position:absolute;left:1008px;top:692px" width="16" height="16"><path d="M15 4 L4 15 M15 8 L8 15 M15 12 L12 15" stroke="#A5A4A9" stroke-width="1.2"/><path d="M15 5 L5 15 M15 9 L9 15 M15 13 L13 15" stroke="#fff" stroke-width="1"/></svg>
<div style="position:absolute;left:0px;top:709px;width:97px;height:30px;border-radius:0 15px 15px 0;background:linear-gradient(to bottom,#D0EAD0 0px,#8CC88C 1.5px,#72BA72 4px,#5CAE5C 14px,#1E9C1E 15px,#14AE14 20px,#0CC40C 28px,#1A6A2A 29px);box-shadow:inset -1px 0 1px #3C8C3C, inset 8px 0 8px -6px rgba(0,80,0,0.45)"></div>
<svg style="position:absolute;left:10px;top:713px" width="21" height="20" viewBox="0 0 21 20">
<g fill="#1A4A1A" opacity="0.45" transform="translate(1,1)"><path d="M5 1 Q8 -0.5 11.2 1 L10 8.6 Q7 7 3.8 8.6 Z"/><path d="M12 1.6 Q15.2 3 19 1.6 L17.8 9 Q14.6 10 11 9 Z"/><path d="M3.6 9.4 Q6.8 7.8 9.9 9.4 L8.8 16.8 Q5.6 15.2 2.4 16.8 Z"/><path d="M10.8 10 Q14.2 11 17.6 10 L16.4 17.4 Q13 18.4 9.6 17.4 Z"/></g>
<path d="M5 1 Q8 -0.5 11.2 1 L10 8.6 Q7 7 3.8 8.6 Z" fill="#F05A14"/>
<path d="M12 1.6 Q15.2 3 19 1.6 L17.8 9 Q14.6 10 11 9 Z" fill="#8ED81E"/>
<path d="M3.6 9.4 Q6.8 7.8 9.9 9.4 L8.8 16.8 Q5.6 15.2 2.4 16.8 Z" fill="#3C78F0"/>
<path d="M10.8 10 Q14.2 11 17.6 10 L16.4 17.4 Q13 18.4 9.6 17.4 Z" fill="#FFC814"/>
</svg>
<div style="position:absolute;left:884px;top:708px;width:140px;height:60px;background:linear-gradient(to bottom,#0C59B9 0px,#0C59B9 1px,#C8DEF8 1px,#BAD4F6 10px,#B4CEF4 44px,#8CB4EC 46px,#6C9ADE 58px,#5A88D0 60px)"></div>
<div style="position:absolute;left:884px;top:709px;width:1px;height:59px;background:#3A6FC8"></div>
<div style="position:absolute;left:885px;top:709px;width:1px;height:59px;background:#E8F0FC"></div>
<svg style="position:absolute;left:0;top:0" width="1024" height="768"><rect x="110" y="717" width="16" height="12" fill="#000"/><text x="111" y="727.5" font-family="Liberation Sans" font-weight="bold" font-size="10" fill="#fff" textLength="14" lengthAdjust="spacingAndGlyphs">2142</text><circle cx="141" cy="723.5" r="6" fill="#2A90EA"/><path d="M137.6 722.8 a3.4 3.4 0 0 1 6.8 0 z" fill="#D8F0FF"/><path d="M137.8 725 q1 2.6 3.6 2.6 q1.6 0 2.8 -1 l0 -1.6 z" fill="#9AD0F8"/><rect x="144" y="725" width="3.5" height="2" fill="#3F80D8"/><path d="M133.5 731 q-2 -3 6 -9.5 q8 -6.5 9.5 -5 q1 1.5 -3 5" fill="none" stroke="#F0B828" stroke-width="1.6"/><circle cx="163.5" cy="723.5" r="6.5" fill="#1E8A80" stroke="#A8D8D0" stroke-width="1.2"/><circle cx="163.5" cy="722.5" r="3.5" fill="#3AA898"/><path d="M161 727 q2.5 -2 5 0" stroke="#1A5A50" fill="none"/><path d="M183 715.5 l2.5 2.5 l-2.5 2.5 M187 715.5 l2.5 2.5 l-2.5 2.5" fill="none" stroke="#fff" stroke-width="1.5"/><path d="M860 714.5 l2.5 2.5 l-2.5 2.5 M864 714.5 l2.5 2.5 l-2.5 2.5" fill="none" stroke="#fff" stroke-width="1.5"/><rect x="110" y="747" width="15" height="11" fill="#111"/><rect x="111" y="749" width="13" height="3" fill="#F0B020"/><rect x="112" y="753" width="11" height="3" fill="#E89818"/><rect x="110" y="746" width="3" height="2" fill="#fff"/><rect x="121" y="746" width="3" height="2" fill="#fff"/><rect x="115" y="750" width="4" height="1" fill="#fff"/><path d="M133.5 745.5 h9.5 l3.5 3.5 v10.5 h-13 z" fill="#fff" stroke="#000" stroke-width="0.9"/><circle cx="140" cy="753.5" r="3.2" fill="#F0B020" stroke="#000" stroke-width="0.9"/><path d="M138.5 754.5 h3" stroke="#000" stroke-width="0.8"/><text x="155.5" y="752" font-family="Liberation Sans" font-weight="bold" font-size="8" fill="#C89028" stroke="#5A3A10" stroke-width="0.4" textLength="15" lengthAdjust="spacingAndGlyphs">CIV</text><path d="M158 753 h10 l-2 2.5 v4.5 h-6 v-4.5 z" fill="#D8B8A8" stroke="#6A4A3A" stroke-width="0.5"/><rect x="895" y="714.5" width="8.5" height="6.5" fill="#2A3A7A"/><rect x="896" y="715" width="6" height="4" fill="#3A4A9A"/><ellipse cx="899.5" cy="723.5" rx="4.5" ry="2.5" fill="#D8D8F0" stroke="#3A4A8A" stroke-width="0.8"/><path d="M905 715 q1.3 2.5 0 5 M907.5 713.5 q2 4 0 8 M910 713 q2 4.5 0 9" fill="none" stroke="#555" stroke-width="0.8"/><ellipse cx="921" cy="718" rx="7.5" ry="5" fill="#EEE" stroke="#666" stroke-width="0.9"/><path d="M917.5 722 l-1.5 3.3 l4.5 -2.8" fill="#EEE" stroke="#666" stroke-width="0.8"/><path d="M916.5 721 v-5.5 l4.5 4 l4.5 -4 v5.5" fill="none" stroke="#D02828" stroke-width="1.8"/><path d="M931 726 L943 714 L939 726 Z" fill="#FF0A0A"/><path d="M940.5 719.5 L947 726 L943 726 L940 721 Z" fill="#10E010"/><rect x="895" y="732" width="16" height="12" fill="#F01818"/><text x="896" y="742" font-family="Liberation Sans" font-weight="bold" font-style="italic" font-size="10" fill="#fff" textLength="14" lengthAdjust="spacingAndGlyphs">ATi</text><path d="M914.5 735 h3 l5 -4 v14 l-5 -4 h-3 z" fill="#E07848" stroke="#000" stroke-width="1"/><path d="M924.5 733 q2 5 0 10 M927 731.5 q3 6.5 0 13" fill="none" stroke="#000" stroke-width="1.1"/><path d="M933 735 q0 -4 5 -4.5 v-1.5 l3 2.5 l-3 2.5 v-1.5 q-3 0 -5 2.5 z" fill="#30B030" stroke="#208020" stroke-width="0.5"/><rect x="935" y="736" width="11" height="6" transform="rotate(-25 940.5 739)" fill="#6A6A78" stroke="#333" stroke-width="0.6"/><rect x="938" y="737" width="6" height="3" transform="rotate(-25 940.5 739)" fill="#C0C8E0"/><rect x="895.5" y="748.5" width="15" height="15" fill="#18F018" stroke="#000" stroke-width="1.2"/><path d="M898.5 757 q4 0 5 4.5 M898.5 753.5 q7.5 0 8.5 8" fill="none" stroke="#000" stroke-width="1.6"/><path d="M898.5 750.5 q10 0 11 11" fill="none" stroke="#8A9A10" stroke-width="0.9"/><rect x="898" y="760" width="2" height="2" fill="#000"/></svg>
<div style="position:absolute;left:201px;top:712px;width:148px;height:24px;box-sizing:border-box;border-radius:3px;border:1px solid #5A7CC8;border-bottom-color:#0E3A8C;background:linear-gradient(to bottom,#8CC6F4 0px,#74B2F0 3px,#5C9CEA 8px,#4A8AE2 10px,#3C7ADA 12px,#3670D2 16px,#2E60C2 20px,#2852B2 23px)"></div>
<div style="position:absolute;left:210px;top:715px;width:16px;height:16px"><svg width="16" height="16"><circle cx="8" cy="8" r="7" fill="#2A50B8"/><circle cx="9" cy="6.5" r="4" fill="#5A8AE0"/><path d="M2.5 3.5 q-2 4 0 8 q3 4.5 8 4 q4 -0.5 5 -4.5 q-2.5 2.5 -6 1.5 q-4 -1.5 -4 -5.5 q0 -2 1 -3.5 q-1.5 0.5 -2 2 q-0.5 -1.5 -2 -2 z" fill="#E8700E"/><path d="M3 5 q-1 4 1.5 6.5 q2.5 2.5 6 2" fill="none" stroke="#FFB030" stroke-width="1"/><path d="M11 1.5 q3 1 4 4 q-1.5 -1 -3 -1 z" fill="#E8700E"/></svg></div>
<div style="position:absolute;left:351px;top:712px;width:148px;height:24px;box-sizing:border-box;border-radius:3px;border:1px solid #5A7CC8;border-bottom-color:#0E3A8C;background:linear-gradient(to bottom,#8CC6F4 0px,#74B2F0 3px,#5C9CEA 8px,#4A8AE2 10px,#3C7ADA 12px,#3670D2 16px,#2E60C2 20px,#2852B2 23px)"></div>
<div style="position:absolute;left:360px;top:715px;width:16px;height:16px"><svg width="16" height="16"><circle cx="8" cy="8" r="7" fill="none" stroke="#30A030" stroke-width="2"/><path d="M3 4 a7 7 0 0 0 0 8" fill="none" stroke="#E03020" stroke-width="2"/><path d="M8 15 a7 7 0 0 0 6 -4" fill="none" stroke="#F0C020" stroke-width="2"/><circle cx="8" cy="8" r="5" fill="#E8F0FF"/><path d="M6.5 5.5 v5 l4 -2.5 z" fill="#1A2A80"/></svg></div>
<div style="position:absolute;left:501px;top:712px;width:148px;height:24px;box-sizing:border-box;border-radius:3px;border:1px solid #5A7CC8;border-bottom-color:#0E3A8C;background:linear-gradient(to bottom,#8CC6F4 0px,#74B2F0 3px,#5C9CEA 8px,#4A8AE2 10px,#3C7ADA 12px,#3670D2 16px,#2E60C2 20px,#2852B2 23px)"></div>
<div style="position:absolute;left:510px;top:715px;width:16px;height:16px"><svg width="16" height="16"><path d="M1 3 h5 l1.5 1.5 h6.5 v8.5 h-13 z" fill="#E8B830"/><path d="M1.5 6.5 h13.5 l-1.5 7 h-12.5 z" fill="#FFE070" stroke="#C89020" stroke-width="0.8"/></svg></div>
<div style="position:absolute;left:651px;top:712px;width:148px;height:24px;box-sizing:border-box;border-radius:3px;border:1px solid #5A7CC8;border-bottom-color:#0E3A8C;background:linear-gradient(to bottom,#8CC6F4 0px,#74B2F0 3px,#5C9CEA 8px,#4A8AE2 10px,#3C7ADA 12px,#3670D2 16px,#2E60C2 20px,#2852B2 23px)"></div>
<div style="position:absolute;left:660px;top:715px;width:16px;height:16px"><svg width="16" height="16"><path d="M1 3 h5 l1.5 1.5 h6.5 v8.5 h-13 z" fill="#E8B830"/><path d="M1.5 6.5 h13.5 l-1.5 7 h-12.5 z" fill="#FFE070" stroke="#C89020" stroke-width="0.8"/></svg></div>
<div style="position:absolute;left:201px;top:742px;width:148px;height:24px;box-sizing:border-box;border-radius:3px;border:1px solid #5A7CC8;border-bottom-color:#0E3A8C;background:linear-gradient(to bottom,#8CC6F4 0px,#74B2F0 3px,#5C9CEA 8px,#4A8AE2 10px,#3C7ADA 12px,#3670D2 16px,#2E60C2 20px,#2852B2 23px)"></div>
<div style="position:absolute;left:210px;top:745px;width:16px;height:16px"><svg width="16" height="16"><rect x="1" y="2" width="14" height="12" fill="#fff" stroke="#8AA" stroke-width="0.5"/><rect x="1" y="2" width="14" height="2" fill="#2A6AD8"/></svg></div>
<div style="position:absolute;left:351px;top:742px;width:148px;height:24px;box-sizing:border-box;border-radius:3px;border:1px solid #5A7CC8;border-bottom-color:#0E3A8C;background:linear-gradient(to bottom,#8CC6F4 0px,#74B2F0 3px,#5C9CEA 8px,#4A8AE2 10px,#3C7ADA 12px,#3670D2 16px,#2E60C2 20px,#2852B2 23px)"></div>
<div style="position:absolute;left:360px;top:745px;width:16px;height:16px"><svg width="16" height="16"><rect width="16" height="16" fill="#40D8AC"/><rect x="1" y="1" width="14" height="14" fill="#38BE98"/>
<g stroke="#174238" stroke-width="1.3" fill="#174238" stroke-linejoin="round"><path d="M0.8 5.4 L3.6 2.2 L6.6 1.6 L8.8 3.2 L7.6 5.2 L5.2 6.4 L4 8.4 L1.4 7.4 Z"/><circle cx="12.1" cy="4.1" r="2.9"/><circle cx="4.1" cy="12" r="2.7"/></g>
<g stroke="#174238" stroke-width="4.4" stroke-linecap="square" fill="none"><path d="M6.5 6.5 L12.8 12.8"/><path d="M4.5 11.5 L11.5 4.5"/></g>
<g stroke="#fff" stroke-width="2.8" stroke-linecap="square" fill="none"><path d="M6.5 6.5 L12.6 12.6"/><path d="M4.6 11.4 L11.4 4.6"/></g>
<g fill="#fff"><path d="M1.2 5.4 L3.8 2.6 L6.5 2.1 L8.3 3.3 L7.2 4.9 L4.9 6.1 L3.8 7.9 L1.7 7.1 Z"/><circle cx="12.1" cy="4.1" r="2.3"/><circle cx="4.1" cy="12" r="2.1"/></g>
<g fill="#38BE98"><rect x="12.2" y="1" width="1.8" height="3" transform="rotate(45 13.1 2.5)"/><rect x="2.1" y="12.2" width="1.8" height="3" transform="rotate(45 3 13.7)"/></g></svg></div>
<div style="position:absolute;left:501px;top:742px;width:148px;height:24px;box-sizing:border-box;border-radius:3px;border:1px solid #1A3070;background:linear-gradient(to bottom,#1E3E8C 0px,#2A55B0 3px,#224AA0 12px,#1E4298 22px,#7EA8E8 24px);box-shadow:inset 1px 1px 1px #102060"></div>
<div style="position:absolute;left:511px;top:746px;width:16px;height:16px"><svg width="16" height="16"><rect width="16" height="16" fill="#40D8AC"/><rect x="1" y="1" width="14" height="14" fill="#38BE98"/>
<g stroke="#174238" stroke-width="1.3" fill="#174238" stroke-linejoin="round"><path d="M0.8 5.4 L3.6 2.2 L6.6 1.6 L8.8 3.2 L7.6 5.2 L5.2 6.4 L4 8.4 L1.4 7.4 Z"/><circle cx="12.1" cy="4.1" r="2.9"/><circle cx="4.1" cy="12" r="2.7"/></g>
<g stroke="#174238" stroke-width="4.4" stroke-linecap="square" fill="none"><path d="M6.5 6.5 L12.8 12.8"/><path d="M4.5 11.5 L11.5 4.5"/></g>
<g stroke="#fff" stroke-width="2.8" stroke-linecap="square" fill="none"><path d="M6.5 6.5 L12.6 12.6"/><path d="M4.6 11.4 L11.4 4.6"/></g>
<g fill="#fff"><path d="M1.2 5.4 L3.8 2.6 L6.5 2.1 L8.3 3.3 L7.2 4.9 L4.9 6.1 L3.8 7.9 L1.7 7.1 Z"/><circle cx="12.1" cy="4.1" r="2.3"/><circle cx="4.1" cy="12" r="2.1"/></g>
<g fill="#38BE98"><rect x="12.2" y="1" width="1.8" height="3" transform="rotate(45 13.1 2.5)"/><rect x="2.1" y="12.2" width="1.8" height="3" transform="rotate(45 3 13.7)"/></g></svg></div>
<div style="position:absolute;left:709px;top:467px;width:1px;height:10px;background:#505050"></div>
<div class="tfb" style="position:absolute;left:450px;top:381px;width:177px;height:181px;border-radius:50%;background:linear-gradient(100deg,#505050 0%,#8A7A88 8%,#D8A8D0 22%,#F8C8F4 45%,#FFE0FF 90%,#F0D0F0 100%)"></div>
<div class="tfb" style="position:absolute;left:471px;top:402px;width:135px;height:139px;border-radius:50%;background:linear-gradient(100deg,#FFE0FF 0%,#F8C8F4 35%,#C8A0C0 70%,#606060 100%)"></div>
<div class="tfb" style="position:absolute;left:491px;top:424px;width:93px;height:96px;border-radius:50%;background:#B48FF6"></div>
<canvas id="torus" width="200" height="200" style="position:absolute;left:440px;top:370px"></canvas>
<script>
(function(){
var c=document.getElementById('torus'); if(!c||!c.getContext) return;
var ctx=c.getContext('2d'); var W=200,H=200; var im=ctx.createImageData(W,H); var d=im.data;
var cx=538.5-440, cy=471.6-370, Ro=88.8, Ri=47.2, R=(Ro+Ri)/2, r=(Ro-Ri)/2, sy=88.5/90.6;
var L=[0.78,0.05,0.62]; var ln=Math.hypot(L[0],L[1],L[2]); L=[L[0]/ln,L[1]/ln,L[2]/ln];
var Hh=[L[0],L[1],L[2]+1]; var hn=Math.hypot(Hh[0],Hh[1],Hh[2]); Hh=[Hh[0]/hn,Hh[1]/hn,Hh[2]/hn];
var NS=24, MT=6;
function inten(phi, th){ var ct=Math.cos(th), st=Math.sin(th); var nx=ct*Math.cos(phi), ny=ct*Math.sin(phi), nz=st;
  var dd=nx*L[0]+ny*L[1]+nz*L[2]; if(dd<0)dd=0; var nh=nx*Hh[0]+ny*Hh[1]+nz*Hh[2]; if(nh<0)nh=0; return [dd, Math.pow(nh,6)]; }
var tab=[]; for(var j=0;j<=NS;j++){tab[j]=[]; for(var k=0;k<=MT;k++){tab[j][k]=inten(2*Math.PI*j/NS, Math.PI*k/MT);}}
var amb=[78,78,78], dif=[195,128,186];
for(var y=0;y<H;y++){for(var x=0;x<W;x++){
  var u=x+0.5-cx, v=(y+0.5-cy)*sy; var rho=Math.sqrt(u*u+v*v); var i=(y*W+x)*4;
  var phi=Math.atan2(v,u); if(phi<0)phi+=2*Math.PI; var seg=2*Math.PI/NS; var j=Math.floor(phi/seg); var tp=(phi-j*seg)/seg;
  var pm=(j+0.5)*seg; var re=rho*Math.cos(phi-pm)/Math.cos(seg/2);
  var ct=(re-R)/r; if(ct<-1||ct>1){d[i+3]=0;continue;}
  var th=Math.acos(ct); var dth=Math.PI/MT; var k=Math.floor(th/dth); if(k>=MT)k=MT-1;
  var r0=R+r*Math.cos(k*dth), r1=R+r*Math.cos((k+1)*dth); var tt=(r0-re)/(r0-r1); if(tt<0)tt=0; if(tt>1)tt=1;
  var a=tab[j][k], b=tab[j][k+1], c2=tab[j+1][k], e=tab[j+1][k+1];
  var dd=(a[0]*(1-tt)+b[0]*tt)*(1-tp)+(c2[0]*(1-tt)+e[0]*tt)*tp;
  var sp=(a[1]*(1-tt)+b[1]*tt)*(1-tp)+(c2[1]*(1-tt)+e[1]*tt)*tp;
  for(var q=0;q<3;q++){var val=amb[q]+dif[q]*Math.pow(dd,0.75)+sp*60; d[i+q]=val>255?255:val;}
  d[i+3]=255;
}}
ctx.putImageData(im,0,0);
var fb=document.querySelectorAll('.tfb'); for(var n=0;n<fb.length;n++) fb[n].style.display='none';
})();
</script>
<span style="position:absolute;left:23px;top:5px;font:bold 14px 'Liberation Sans', sans-serif;line-height:17px;white-space:pre;color:#fff;transform:scaleX(0.9132);transform-origin:0 0;text-shadow:1px 1px 0 #0a2a7a;">Untitled - Commando Level Editor</span>
<span style="position:absolute;left:6px;top:29px;font:normal 11px 'Liberation Sans', sans-serif;line-height:13px;white-space:pre;color:#000;transform:scaleX(0.8458);transform-origin:0 0;">File</span>
<span style="position:absolute;left:33px;top:29px;font:normal 11px 'Liberation Sans', sans-serif;line-height:13px;white-space:pre;color:#000;transform:scaleX(1.0016);transform-origin:0 0;">Edit</span>
<span style="position:absolute;left:64px;top:29px;font:normal 11px 'Liberation Sans', sans-serif;line-height:13px;white-space:pre;color:#000;transform:scaleX(0.8877);transform-origin:0 0;">View</span>
<span style="position:absolute;left:98px;top:29px;font:normal 11px 'Liberation Sans', sans-serif;line-height:13px;white-space:pre;color:#000;transform:scaleX(1.0064);transform-origin:0 0;">Object</span>
<span style="position:absolute;left:141px;top:29px;font:normal 11px 'Liberation Sans', sans-serif;line-height:13px;white-space:pre;color:#000;transform:scaleX(0.8613);transform-origin:0 0;">Vis</span>
<span style="position:absolute;left:166px;top:29px;font:normal 11px 'Liberation Sans', sans-serif;line-height:13px;white-space:pre;color:#000;transform:scaleX(0.9810);transform-origin:0 0;">Pathfinding</span>
<span style="position:absolute;left:232px;top:29px;font:normal 11px 'Liberation Sans', sans-serif;line-height:13px;white-space:pre;color:#000;transform:scaleX(0.9599);transform-origin:0 0;">Lighting</span>
<span style="position:absolute;left:282px;top:29px;font:normal 11px 'Liberation Sans', sans-serif;line-height:13px;white-space:pre;color:#000;transform:scaleX(0.9112);transform-origin:0 0;">Sounds</span>
<span style="position:absolute;left:328px;top:29px;font:normal 11px 'Liberation Sans', sans-serif;line-height:13px;white-space:pre;color:#000;transform:scaleX(0.9201);transform-origin:0 0;">Camera</span>
<span style="position:absolute;left:377px;top:29px;font:normal 11px 'Liberation Sans', sans-serif;line-height:13px;white-space:pre;color:#000;transform:scaleX(0.9635);transform-origin:0 0;">Strings</span>
<span style="position:absolute;left:422px;top:29px;font:normal 11px 'Liberation Sans', sans-serif;line-height:13px;white-space:pre;color:#000;transform:scaleX(0.9652);transform-origin:0 0;">Presets</span>
<span style="position:absolute;left:470px;top:29px;font:normal 11px 'Liberation Sans', sans-serif;line-height:13px;white-space:pre;color:#000;transform:scaleX(1.0293);transform-origin:0 0;">Report</span>
<span style="position:absolute;left:8px;top:624px;font:normal 12px 'Liberation Sans', sans-serif;line-height:14px;white-space:pre;color:#000;transform:scaleX(0.8795);transform-origin:0 0;">TimeManager::Update: warning, frame 32 was slow (15060 ms)</span>
<span style="position:absolute;left:8px;top:637px;font:normal 12px 'Liberation Sans', sans-serif;line-height:14px;white-space:pre;color:#000;transform:scaleX(0.8795);transform-origin:0 0;">TimeManager::Update: warning, frame 218 was slow (4297 ms)</span>
<span style="position:absolute;left:8px;top:650px;font:normal 12px 'Liberation Sans', sans-serif;line-height:14px;white-space:pre;color:#000;transform:scaleX(0.8795);transform-origin:0 0;">TimeManager::Update: warning, frame 225 was slow (2356 ms)</span>
<span style="position:absolute;left:1px;top:694px;font:normal 11px 'Liberation Sans', sans-serif;line-height:13px;white-space:pre;color:#000;transform:scaleX(1.0231);transform-origin:0 0;">Left button: look up/dn Arrow keys: move/turn Shift: run</span>
<span style="position:absolute;left:721px;top:82px;font:normal 12px 'Liberation Sans', sans-serif;line-height:14px;white-space:pre;color:#000;transform:scaleX(0.8602);transform-origin:0 0;">Presets</span>
<span style="position:absolute;left:767px;top:84px;font:normal 12px 'Liberation Sans', sans-serif;line-height:14px;white-space:pre;color:#000;transform:scaleX(0.8954);transform-origin:0 0;">Instances</span>
<span style="position:absolute;left:825px;top:84px;font:normal 12px 'Liberation Sans', sans-serif;line-height:14px;white-space:pre;color:#000;transform:scaleX(0.8733);transform-origin:0 0;">Conversations</span>
<span style="position:absolute;left:904px;top:84px;font:normal 12px 'Liberation Sans', sans-serif;line-height:14px;white-space:pre;color:#000;transform:scaleX(0.8803);transform-origin:0 0;">Overlap</span>
<span style="position:absolute;left:953px;top:84px;font:normal 12px 'Liberation Sans', sans-serif;line-height:14px;white-space:pre;color:#000;transform:scaleX(0.8994);transform-origin:0 0;">Heightfield</span>
<span style="position:absolute;left:770px;top:111px;font:normal 12px 'Liberation Sans', sans-serif;line-height:14px;white-space:pre;color:#000;transform:scaleX(0.8995);transform-origin:0 0;">Terrain</span>
<span style="position:absolute;left:770px;top:175px;font:normal 12px 'Liberation Sans', sans-serif;line-height:14px;white-space:pre;color:#000;transform:scaleX(0.8999);transform-origin:0 0;">Tile</span>
<span style="position:absolute;left:770px;top:191px;font:normal 12px 'Liberation Sans', sans-serif;line-height:14px;white-space:pre;color:#000;transform:scaleX(0.8937);transform-origin:0 0;">Object</span>
<span style="position:absolute;left:770px;top:207px;font:normal 12px 'Liberation Sans', sans-serif;line-height:14px;white-space:pre;color:#000;transform:scaleX(0.8624);transform-origin:0 0;">Buildings</span>
<span style="position:absolute;left:770px;top:223px;font:normal 12px 'Liberation Sans', sans-serif;line-height:14px;white-space:pre;color:#000;transform:scaleX(0.8762);transform-origin:0 0;">Munitions</span>
<span style="position:absolute;left:770px;top:239px;font:normal 12px 'Liberation Sans', sans-serif;line-height:14px;white-space:pre;color:#000;transform:scaleX(0.8821);transform-origin:0 0;">Dummy Object</span>
<span style="position:absolute;left:770px;top:255px;font:normal 12px 'Liberation Sans', sans-serif;line-height:14px;white-space:pre;color:#000;transform:scaleX(0.8784);transform-origin:0 0;">Cover Spots</span>
<span style="position:absolute;left:770px;top:271px;font:normal 12px 'Liberation Sans', sans-serif;line-height:14px;white-space:pre;color:#000;transform:scaleX(0.8836);transform-origin:0 0;">Light</span>
<span style="position:absolute;left:770px;top:287px;font:normal 12px 'Liberation Sans', sans-serif;line-height:14px;white-space:pre;color:#000;transform:scaleX(0.8933);transform-origin:0 0;">Sound</span>
<span style="position:absolute;left:770px;top:303px;font:normal 12px 'Liberation Sans', sans-serif;line-height:14px;white-space:pre;color:#000;transform:scaleX(0.9164);transform-origin:0 0;">Waypath</span>
<span style="position:absolute;left:770px;top:319px;font:normal 12px 'Liberation Sans', sans-serif;line-height:14px;white-space:pre;color:#000;transform:scaleX(0.8878);transform-origin:0 0;">Twiddlers</span>
<span style="position:absolute;left:770px;top:335px;font:normal 12px 'Liberation Sans', sans-serif;line-height:14px;white-space:pre;color:#000;transform:scaleX(0.8756);transform-origin:0 0;">Editor Objects</span>
<span style="position:absolute;left:770px;top:351px;font:normal 12px 'Liberation Sans', sans-serif;line-height:14px;white-space:pre;color:#000;transform:scaleX(0.8723);transform-origin:0 0;">Global Settings</span>
<span style="position:absolute;left:789px;top:127px;font:normal 12px 'Liberation Sans', sans-serif;line-height:14px;white-space:pre;color:#000;transform:scaleX(0.8781);transform-origin:0 0;">asd</span>
<span style="position:absolute;left:808px;top:143px;font:normal 12px 'Liberation Sans', sans-serif;line-height:14px;white-space:pre;color:#000;transform:scaleX(0.8781);transform-origin:0 0;">asd</span>
<span style="position:absolute;left:808px;top:159px;font:normal 12px 'Liberation Sans', sans-serif;line-height:14px;white-space:pre;color:#000;transform:scaleX(0.8781);transform-origin:0 0;">asd</span>
<span style="position:absolute;left:246px;top:82px;font:normal 11px 'Liberation Sans', sans-serif;line-height:13px;white-space:pre;color:#000;transform:scaleX(0.9905);transform-origin:0 0;">Walk-thru mode (F8)</span>
<span style="position:absolute;left:729px;top:588px;font:normal 11px 'Liberation Sans', sans-serif;line-height:13px;white-space:pre;color:#A0A0A4;transform:scaleX(0.8939);transform-origin:0 0;text-shadow:1px 1px 0 #fff;">Add</span>
<span style="position:absolute;left:758px;top:588px;font:normal 11px 'Liberation Sans', sans-serif;line-height:13px;white-space:pre;color:#000;transform:scaleX(0.8734);transform-origin:0 0;">Temp</span>
<span style="position:absolute;left:792px;top:588px;font:normal 11px 'Liberation Sans', sans-serif;line-height:13px;white-space:pre;color:#000;transform:scaleX(0.8734);transform-origin:0 0;">Make</span>
<span style="position:absolute;left:826px;top:588px;font:normal 11px 'Liberation Sans', sans-serif;line-height:13px;white-space:pre;color:#000;transform:scaleX(0.9577);transform-origin:0 0;">Mod</span>
<span style="position:absolute;left:866px;top:588px;font:normal 11px 'Liberation Sans', sans-serif;line-height:13px;white-space:pre;color:#000;transform:scaleX(0.9260);transform-origin:0 0;">Info</span>
<span style="position:absolute;left:898px;top:588px;font:normal 11px 'Liberation Sans', sans-serif;line-height:13px;white-space:pre;color:#000;transform:scaleX(0.8916);transform-origin:0 0;">Xtra</span>
<span style="position:absolute;left:953px;top:588px;font:normal 11px 'Liberation Sans', sans-serif;line-height:13px;white-space:pre;color:#000;transform:scaleX(0.9082);transform-origin:0 0;">Del</span>
<span style="position:absolute;left:557px;top:694px;font:normal 11px 'Liberation Sans', sans-serif;line-height:13px;white-space:pre;color:#000;transform:scaleX(1.0161);transform-origin:0 0;">Camera (0.00,0.00,80.00)</span>
<span style="position:absolute;left:739px;top:694px;font:normal 11px 'Liberation Sans', sans-serif;line-height:13px;white-space:pre;color:#000;transform:scaleX(0.9956);transform-origin:0 0;">Frame 1 / 0</span>
<span style="position:absolute;left:937px;top:694px;font:normal 11px 'Liberation Sans', sans-serif;line-height:13px;white-space:pre;color:#000;transform:scaleX(0.9736);transform-origin:0 0;">Polys 5100</span>
<span style="position:absolute;left:35px;top:712px;font:italic bold 19.5px 'Liberation Sans', sans-serif;line-height:23px;white-space:pre;color:#fff;transform:scaleX(0.9342);transform-origin:0 0;text-shadow:1px 1px 1px #1A4A1A;">start</span>
<span style="position:absolute;left:230px;top:717px;font:normal 11px 'Liberation Sans', sans-serif;line-height:13px;white-space:pre;color:#fff;transform:scaleX(0.9659);transform-origin:0 0;">Command and Con...</span>
<span style="position:absolute;left:380px;top:717px;font:normal 11px 'Liberation Sans', sans-serif;line-height:13px;white-space:pre;color:#fff;transform:scaleX(0.9644);transform-origin:0 0;">Windows Media Pla...</span>
<span style="position:absolute;left:530px;top:717px;font:normal 11px 'Liberation Sans', sans-serif;line-height:13px;white-space:pre;color:#fff;transform:scaleX(0.9462);transform-origin:0 0;">Data</span>
<span style="position:absolute;left:680px;top:717px;font:normal 11px 'Liberation Sans', sans-serif;line-height:13px;white-space:pre;color:#fff;transform:scaleX(0.8180);transform-origin:0 0;">Pics</span>
<span style="position:absolute;left:230px;top:747px;font:normal 11px 'Liberation Sans', sans-serif;line-height:13px;white-space:pre;color:#fff;transform:scaleX(0.9452);transform-origin:0 0;">Renegade</span>
<span style="position:absolute;left:380px;top:747px;font:normal 11px 'Liberation Sans', sans-serif;line-height:13px;white-space:pre;color:#fff;transform:scaleX(0.9815);transform-origin:0 0;">Untitled - Command...</span>
<span style="position:absolute;left:531px;top:747px;font:normal 11px 'Liberation Sans', sans-serif;line-height:13px;white-space:pre;color:#fff;transform:scaleX(0.9815);transform-origin:0 0;">Untitled - Command...</span>
<span style="position:absolute;left:812px;top:732px;font:normal 11px 'Liberation Sans', sans-serif;line-height:13px;white-space:pre;color:#fff;transform:scaleX(0.9911);transform-origin:0 0;">Desktop</span>
<span style="position:absolute;left:962px;top:713px;font:normal 11px 'Liberation Sans', sans-serif;line-height:13px;white-space:pre;color:#101840;transform:scaleX(0.9764);transform-origin:0 0;">8:12 PM</span>
<span style="position:absolute;left:962px;top:732px;font:normal 11px 'Liberation Sans', sans-serif;line-height:13px;white-space:pre;color:#101840;transform:scaleX(0.9964);transform-origin:0 0;">Monday</span>
<span style="position:absolute;left:957px;top:751px;font:normal 11px 'Liberation Sans', sans-serif;line-height:13px;white-space:pre;color:#101840;transform:scaleX(1.0217);transform-origin:0 0;">12/3/2007</span>
</body></html>
